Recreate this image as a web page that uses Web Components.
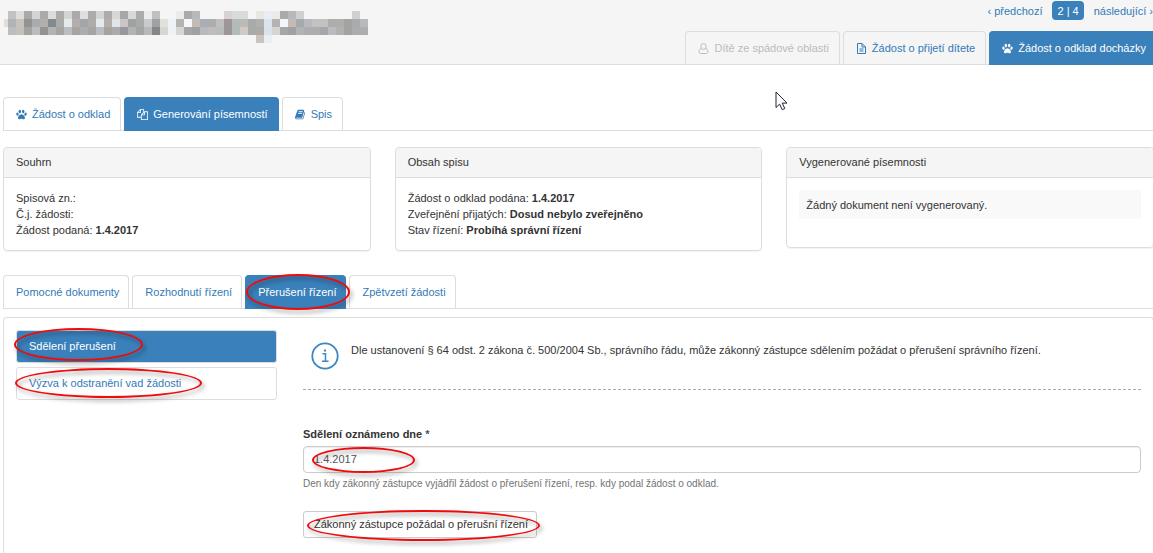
<!DOCTYPE html>
<html lang="cs">
<head>
<meta charset="utf-8">
<title>Žádost o odklad docházky</title>
<style>
  body { margin: 0; background: #fff; color: #333; font: 11px/16px "Liberation Sans", Arial, sans-serif; }
</style>
</head>
<body>
<school-app></school-app>

<script>
const define = (name, html, setup) => {
  const template = document.createElement('template');
  template.innerHTML = html;
  customElements.define(name, class extends HTMLElement {
    constructor() {
      super();
      this.attachShadow({ mode: 'open' }).append(template.content.cloneNode(true));
    }
    connectedCallback() { if (setup) setup(this, this.shadowRoot); }
  });
};

/* Icons */
const ICONS = {
  paw: ['0 0 22 22', '<ellipse cx="7.6" cy="5.2" rx="2.5" ry="3.6"/><ellipse cx="14.4" cy="5.2" rx="2.5" ry="3.6"/><ellipse cx="2.9" cy="10.4" rx="2.3" ry="3.2" transform="rotate(-20 2.9 10.4)"/><ellipse cx="19.1" cy="10.4" rx="2.3" ry="3.2" transform="rotate(20 19.1 10.4)"/><path d="M11 10.4c3.400 0 7 4.600 7 7.600 0 2-1.500 2.500-3 2.500-1.700 0-2.500-1-4-1s-2.300 1-4 1c-1.500 0-3-.5-3-2.500 0-3 3.600-7.600 7-7.600z"/>'],
  book: ['0 0 1792 1792', '<path d="M1639 478q40 57 18 129l-275 906q-19 64-76.5 107.500t-122.500 43.500h-923q-77 0-148.500-53.500t-99.500-131.500q-24-67-2-127 0-4 3-27t4-37q1-8-3-21.500t-3-19.500q2-11 8-21t16.500-23.500 16.500-23.500q23-38 45-91.500t30-91.500q3-10 .5-30t-.5-28q3-11 17-28t17-23q21-36 42-92t25-90q1-9-2.500-32t.5-28q4-13 22-30.500t22-22.500q19-26 42.500-84.500t27.500-96.500q1-8-3-25.500t-2-26.500q2-8 9-18t18-23 17-21q8-12 16.500-30.500t15-35 16-36 19.500-32 26.500-23.500 36-11.500 47.500 5.500l-1 3q38-9 51-9h761q74 0 114 56t18 130l-274 906q-36 119-71.500 153.500t-128.500 34.500h-869q-27 0-38 15-11 16-1 43 24 70 144 70h923q29 0 56-15.500t35-41.500l300-987q7-22 5-57 38 15 59 43zm-1064 2q-4 13 2 22.500t20 9.500h608q13 0 25.500-9.500t16.500-22.500l21-64q4-13-2-22.500t-20-9.500h-608q-13 0-25.500 9.500t-16.500 22.500zm-83 256q-4 13 2 22.500t20 9.500h608q13 0 25.500-9.500t16.500-22.500l21-64q4-13-2-22.500t-20-9.500h-608q-13 0-25.500 9.500t-16.500 22.500z"/>'],
  copy: ['0 0 1792 1792', '<path d="M1696 384q40 0 68 28t28 68v1216q0 40-28 68t-68 28h-960q-40 0-68-28t-28-68v-288h-544q-40 0-68-28t-28-68v-672q0-40 20-88t48-76l408-408q28-28 76-48t88-20h416q40 0 68 28t28 68v328q68-40 128-40h416zm-544 213l-299 299h299v-299zm-640-384l-299 299h299v-299zm196 647l316-316v-416h-384v416q0 40-28 68t-68 28h-416v640h512v-256q0-40 20-88t48-76zm956 804v-1152h-384v416q0 40-28 68t-68 28h-416v640h896z"/>'],
  file: ['0 0 11 11', '<path fill="none" stroke="currentColor" d="M1.500.5h4.500l3.500 3.500v6.500h-8zM6 .5v3.500h3.500M3.500 6h4M3.500 8h4"/>'],
  user: ['0 0 11 11', '<path fill="none" stroke="currentColor" d="M5.500.6a2.600 2.800 0 0 1 0 5.800 2.600 2.800 0 0 1 0-5.800zM3.300 5.300c-1.500.5-2.200 1.900-2.200 3.400 0 1.200.7 1.800 1.700 1.800h5.400c1 0 1.700-.6 1.700-1.800 0-1.500-.7-2.900-2.200-3.400"/>'],
  info: ['0 0 28 28', '<circle cx="14" cy="14" r="12.700" fill="none" stroke="currentColor" stroke-width="1.800"/><path fill="none" stroke="currentColor" stroke-width="1.500" d="M11.500 11.800h3v7M11 19.300h6.500"/><path d="M13 7.500h2v2h-2z"/>'],
  pointer: ['0 0 13 20', '<path fill="#fff" stroke="#223" d="M1 1v15.500l3.600-3.400 2.600 5.600 2.600-1.200-2.600-5.400h4.800z"/>'],
};
define('ui-icon', `
  <style>
    :host { display: block; flex: none; width: 11px; height: 11px; }
    svg { display: block; width: 100%; height: 100%; fill: currentColor; }
  </style>
  <svg aria-hidden="true"></svg>`, (host, root) => {
  const [box, shapes] = ICONS[host.getAttribute('name')];
  const svg = root.querySelector('svg');
  svg.setAttribute('viewBox', box);
  svg.innerHTML = shapes;
});

/* Red ellipse with a soft shadow that marks a control; it fills its own box */
define('ring-mark', `
  <style>
    :host { position: absolute; pointer-events: none; z-index: 1; box-sizing: border-box;
      border: 2px solid #f00a0a; border-radius: 50%; filter: drop-shadow(2px 3px 2px rgba(0,0,0,.4)); }
  </style>`);

/* Pixelated name: rows of 8px squares, '-' is an empty square */
const NAME_ROWS = [
  '- c0c2c4 e0ddd8 a8a9a9 d4d4d2 a9aaab dcdcdb a9acab d4d4d2 a9a9a9 e0dfdf a9acab d4d5d2 a9acab d8d8d3 a7a7a7 d8d8d8 aaabab e8edf2 c0c0c0 - - eeeae7 aaaaac b4b9be - - - d8d2d3 d9dbdb d9dbdb - e8e8e3 e8eef3 eeeae7 a9a9ab b4b9be d0d0d0 - - - - - - d0d0d0 -',
  'e0ddd8 b0b4b6 c6c3be 939393 a9acac b3aeab 838a8e a9acab e4e9ee b3aeae a3a5a8 adacab e4e9ee b3aeab dfe5e8 cbc6c4 9fa1a3 a9aaab c9cacb 9fa2a4 e3dfdb edf2f7 b4b4b2 f5f7f9 c3bab4 a9adb4 adacae c1bebe 9c9698 b4bab9 bababa a7abaa b1b0ad dbe3ec b3b3b3 f3f5f8 c3bab4 a3abac b8bac0 c2c2c2 c2c2c2 adadab aeaeac a3a3a0 aaabad b8b8be',
  '- bdbdbd c3c1bc a6a29e b9bdc0 939391 b3b3b5 a4a4a0 b8bec2 a8a4a0 adadaf a8a4a0 b8bec2 a6a29e a8acab 9797a0 b3b3b5 a4a4a0 b4b9bd 868686 d6d6d6 edf2f7 d8d6d0 a6a6a8 9fa0a2 b8babf c2bbbc b8bdbb 9c9698 b1bcba d0c9c4 a7abaa aeaaa7 dae2ec d8d4ce a6a6a8 9fa0a2 b1b4b6 adadaf adadab a6a6ac b9bbbf b4b1ac a3a3a3 a9adb0 aeaeae',
  '- - - - - - - - - - - - - - - - - - - - - - - - - - - - - - - - c9c3be e8eef3 - - - - - - - - - - - -',
];
define('masked-name', `
  <style>
    :host { display: block; }
    svg { display: block; }
  </style>
  <svg width="364" height="32" viewBox="4 0 364 32" shape-rendering="crispEdges" role="img" aria-label="Skryté jméno"></svg>`, (host, root) => {
  root.querySelector('svg').innerHTML = NAME_ROWS.map((row, y) => row.split(' ').map((c, x) =>
    c === '-' ? '' : `<rect x="${x * 8}" y="${y * 8}" width="8" height="8" fill="#${c}"/>`).join('')).join('');
});

/* Tabs */
define('tab-bar', `
  <style>
    :host { display: flex; gap: 3px; border-bottom: 1px solid #ddd; }
    :host([align="end"]) { justify-content: flex-end; }
  </style>
  <slot></slot>`);
define('tab-item', `
  <style>
    :host { display: block; position: relative; }
    a { display: flex; align-items: center; gap: 5px; padding: 8px 9px 8px 12px; white-space: nowrap;
      border: 1px solid #ddd; border-bottom: 0; border-radius: 4px 4px 0 0; color: #337ab7; text-decoration: none; }
    :host([icon]) a { padding-right: 10px; }
    :host([active]) { margin-bottom: -1px; }
    :host([active]) a { background: #3a80ba; border-color: #3a80ba; color: #fff; padding-bottom: 9px; }
    :host([disabled]) a { color: #bbb; }
    slot[name=mark]::slotted(*) { inset: -1px -4px -1px 1px; }
  </style>
  <a href="#"><slot></slot></a><slot name="mark"></slot>`, (host, root) => {
  if (host.hasAttribute('icon')) {
    const icon = document.createElement('ui-icon');
    icon.setAttribute('name', host.getAttribute('icon'));
    root.querySelector('a').prepend(icon);
  }
  if (host.hasAttribute('disabled')) root.querySelector('a').setAttribute('aria-disabled', 'true');
});

define('record-pager', `
  <style>
    :host { display: block; }
    nav { display: flex; justify-content: flex-end; align-items: center; gap: 10px; padding-right: 4px; }
    a { color: #337ab7; text-decoration: none; white-space: nowrap; }
    span { background: #3a80ba; color: #fff; border-radius: 4px; padding: 2px 5px 1px; }
  </style>
  <nav aria-label="Záznamy"><a href="#">‹ předchozí</a><span>2 | 4</span><a href="#">následující ›</a></nav>`);

define('page-header', `
  <style>
    :host { display: flex; align-items: stretch; justify-content: space-between; margin-right: -4px;
      background: linear-gradient(#ddd, #ddd) bottom / 100% 1px no-repeat #f5f5f5; }
    masked-name { padding: 11px 0 0 4px; }
    .side { display: grid; gap: 11px; padding-top: 1px; }
  </style>
  <masked-name></masked-name>
  <div class="side">
    <record-pager></record-pager>
    <tab-bar align="end">
      <tab-item icon="user" disabled>Dítě ze spádové oblasti</tab-item>
      <tab-item icon="file">Žádost o přijetí dítete</tab-item>
      <tab-item icon="paw" active>Žádost o odklad docházky</tab-item>
    </tab-bar>
  </div>`);

define('info-card', `
  <style>
    :host { display: block; align-self: start; border: 1px solid #ddd; border-radius: 4px; box-shadow: 0 1px 1px rgba(0,0,0,.05); }
    header { background: #f5f5f5; border-bottom: 1px solid #ddd; border-radius: 3px 3px 0 0; padding: 6px 12px 7px; }
    .body { padding: 12px; }
    ::slotted(p) { margin: 0; }
    ::slotted(.empty) { background: #f9f9f9; padding: 7px 7px 6px; margin-bottom: 16px; }
  </style>
  <header><slot name="title"></slot></header>
  <div class="body"><slot></slot></div>`);

define('side-item', `
  <style>
    :host { display: block; position: relative; }
    a { display: block; padding: 7px 12px 8px; border: 1px solid #ddd; border-radius: 3px; color: #337ab7; text-decoration: none; }
    :host([active]) a { background: #3a80ba; color: #fff; }
    ::slotted(.short) { inset: -2px 134px 2px -2px; }
    ::slotted(.long) { inset: 1px 75px 2px -1px; }
  </style>
  <a href="#"><slot></slot></a><slot name="mark"></slot>`);

define('info-note', `
  <style>
    :host { display: flex; gap: 12px; padding: 12px 8px 19px; border-bottom: 1px dashed #aaa; }
    ui-icon { width: 28px; height: 28px; color: #3a87c4; }
  </style>
  <ui-icon name="info"></ui-icon><div><slot></slot></div>`);

define('notice-form', `
  <style>
    :host { display: block; }
    form { display: grid; justify-items: start; }
    label { font-weight: bold; margin-bottom: 4px; }
    label span { color: #35597a; }
    .field { position: relative; width: 100%; }
    input { display: block; box-sizing: border-box; width: 100%; height: 27px; padding: 0 10px 2px; font: inherit; color: #555;
      background: #fff; border: 1px solid #ccc; border-radius: 4px; box-shadow: inset 0 1px 1px rgba(0,0,0,.075); }
    small { font-size: 10px; color: #737373; margin: 3px 0 19px; }
    .action { position: relative; }
    button { display: block; height: 27px; padding: 0 8px 2px 10px; font: inherit; color: #333; background: #fff;
      border: 1px solid #ccc; border-radius: 3px; }
    .field ring-mark { left: 9px; top: 1px; width: 103px; height: 26px; }
    .action ring-mark { inset: -1px -3px -3px 4px; }
  </style>
  <form>
    <label for="date">Sdělení oznámeno dne <span>*</span></label>
    <div class="field"><input id="date" type="text" value="1.4.2017" aria-describedby="hint"><ring-mark></ring-mark></div>
    <small id="hint">Den kdy zákonný zástupce vyjádřil žádost o přerušení řízení, resp. kdy podal žádost o odklad.</small>
    <div class="action"><button type="button">Zákonný zástupce požádal o přerušní řízení</button><ring-mark></ring-mark></div>
  </form>`);

define('school-app', `
  <style>
    :host { display: flex; flex-direction: column; min-height: 100vh; position: relative; overflow: hidden; }
    main { flex: 1; display: flex; flex-direction: column; margin: 32px -1px 0 3px; }
    .cards { display: grid; grid-template-columns: repeat(3, 1fr); gap: 24px; margin: 16px 0 24px; }
    .panel { flex: 1; display: grid; grid-template-columns: 261px 1fr; gap: 26px; align-items: start;
      margin-top: 8px; padding: 12px; border: 1px solid #ddd; border-bottom: 0; border-radius: 4px 4px 0 0; }
    .menu { display: grid; gap: 4px; }
    .detail { display: grid; gap: 36px; }
    .pointer { position: absolute; left: 775px; top: 91px; width: 13px; height: 20px; }
  </style>
  <page-header></page-header>
  <main>
    <tab-bar>
      <tab-item icon="paw">Žádost o odklad</tab-item>
      <tab-item icon="copy" active>Generování písemností</tab-item>
      <tab-item icon="book">Spis</tab-item>
    </tab-bar>
    <section class="cards">
      <info-card><span slot="title">Souhrn</span>
        <p>Spisová zn.:</p><p>Č.j. žádosti:</p><p>Žádost podaná: <b>1.4.2017</b></p></info-card>
      <info-card><span slot="title">Obsah spisu</span>
        <p>Žádost o odklad podána: <b>1.4.2017</b></p><p>Zveřejnění přijatých: <b>Dosud nebylo zveřejněno</b></p><p>Stav řízení: <b>Probíhá správní řízení</b></p></info-card>
      <info-card><span slot="title">Vygenerované písemnosti</span>
        <p class="empty">Žádný dokument není vygenerovaný.</p></info-card>
    </section>
    <tab-bar>
      <tab-item>Pomocné dokumenty</tab-item>
      <tab-item>Rozhodnutí řízení</tab-item>
      <tab-item active>Přerušení řízení<ring-mark slot="mark"></ring-mark></tab-item>
      <tab-item>Zpětvzetí žádosti</tab-item>
    </tab-bar>
    <section class="panel">
      <nav class="menu">
        <side-item active>Sdělení přerušení<ring-mark slot="mark" class="short"></ring-mark></side-item>
        <side-item>Výzva k odstranění vad žádosti<ring-mark slot="mark" class="long"></ring-mark></side-item>
      </nav>
      <div class="detail">
        <info-note>Dle ustanovení § 64 odst. 2 zákona č. 500/2004 Sb., správního řádu, může zákonný zástupce sdělením požádat o přerušení správního řízení.</info-note>
        <notice-form></notice-form>
      </div>
    </section>
  </main>
  <ui-icon class="pointer" name="pointer"></ui-icon>`);
</script>
</body>
</html>
